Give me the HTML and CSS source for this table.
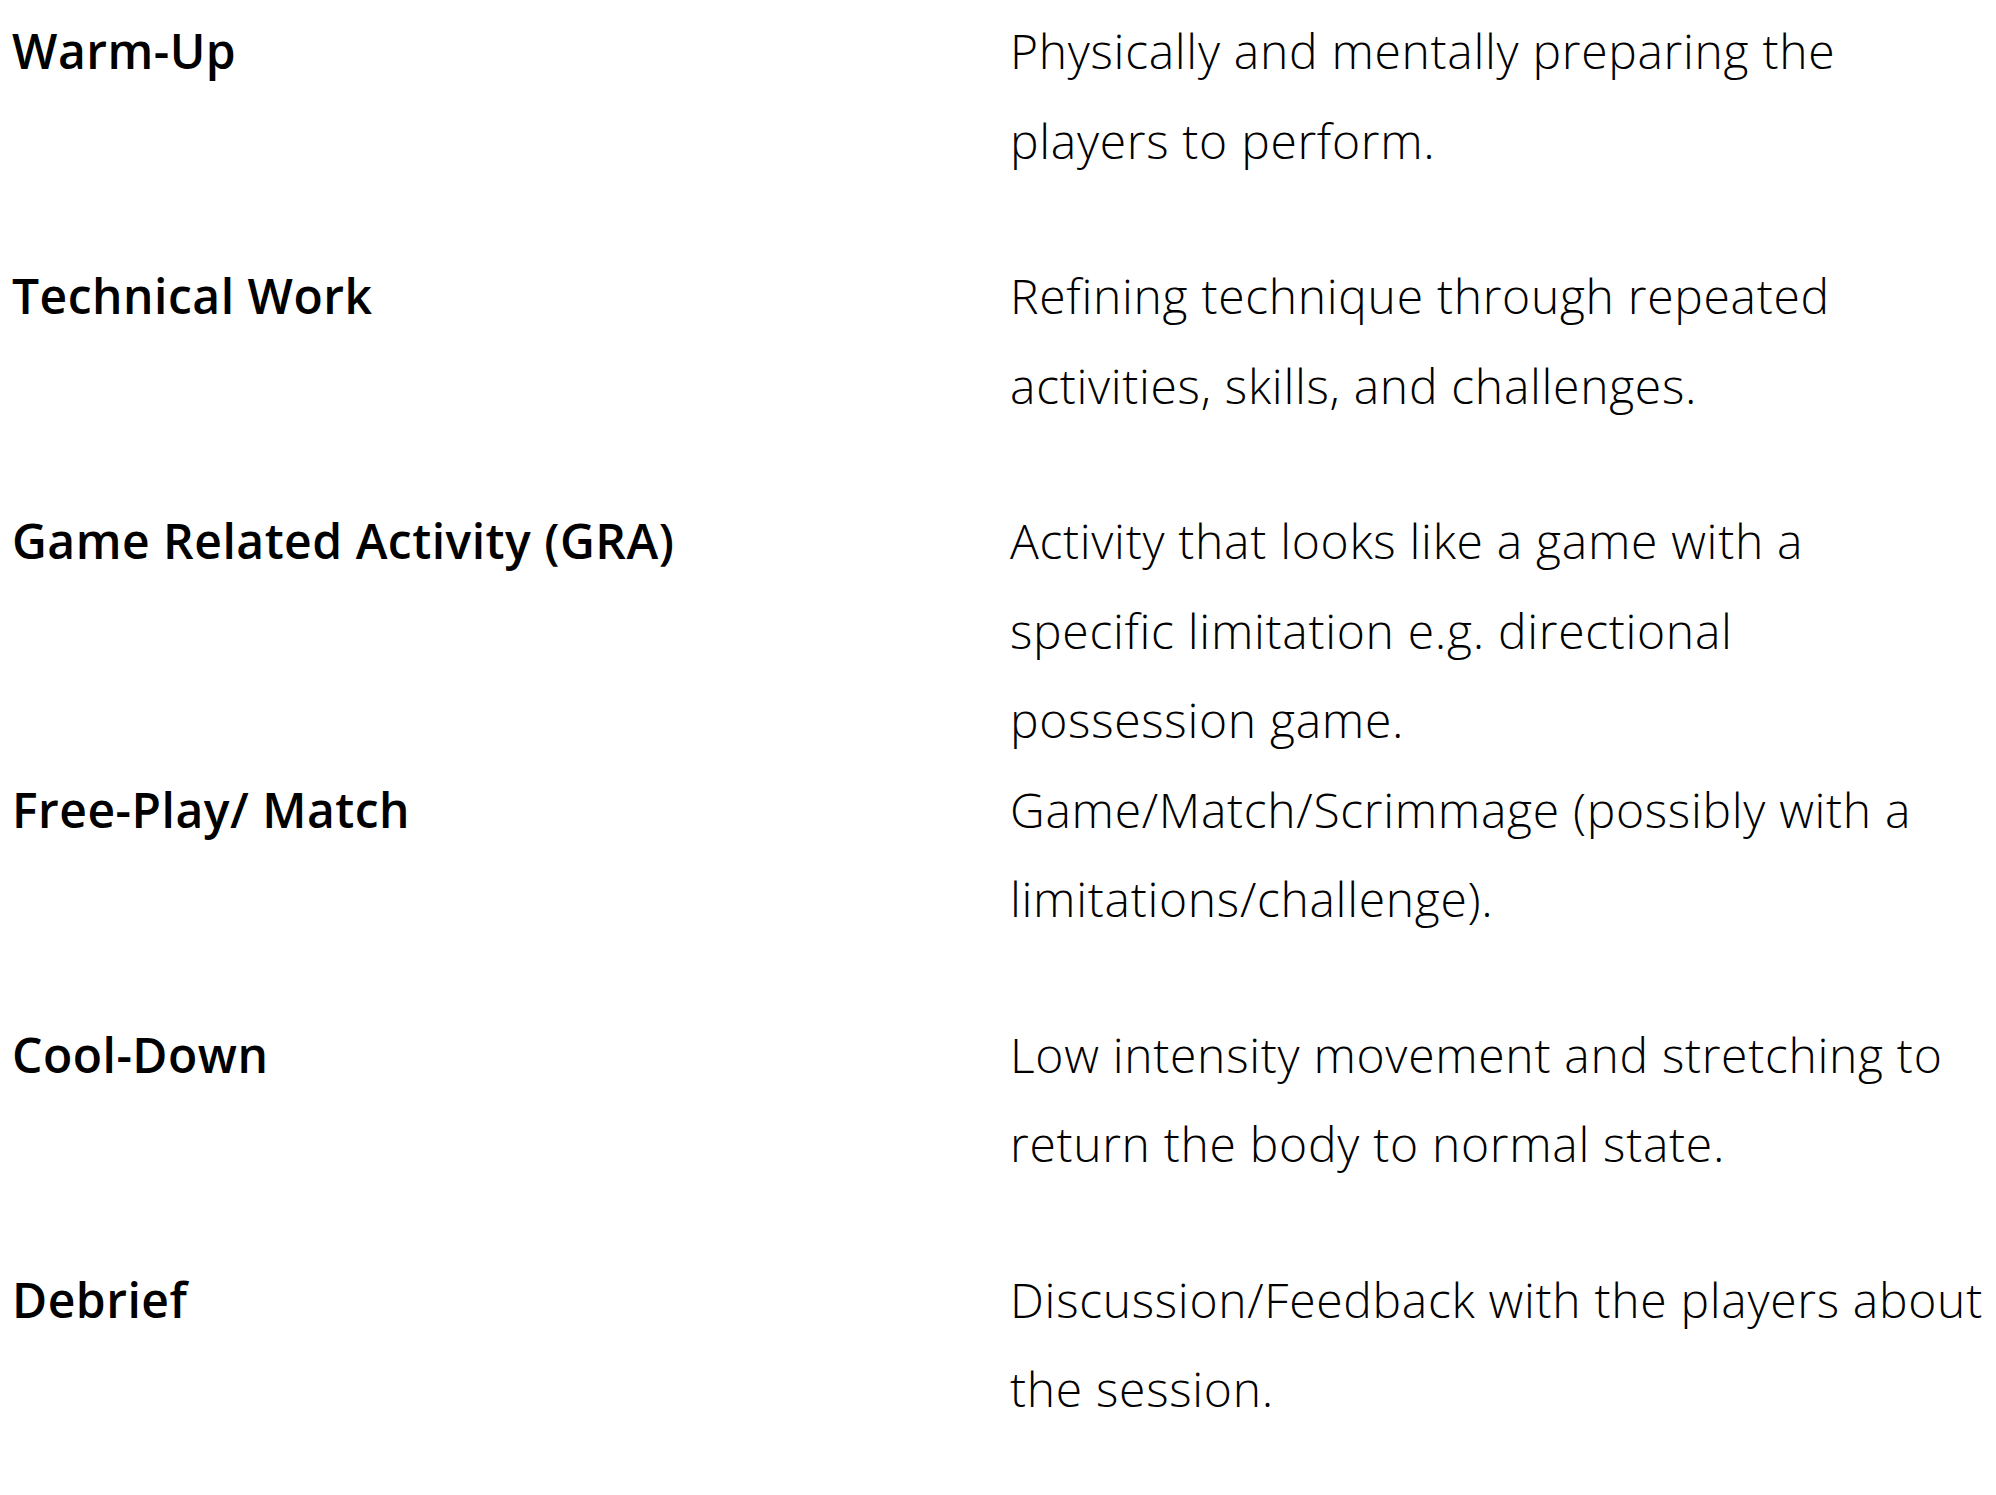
FILE: index.html
```html
<!DOCTYPE html>
<html lang="en">
<head>
<meta charset="utf-8">
<title>Session Structure</title>
<link rel="stylesheet" href="styles.css">
</head>
<body>
<dl class="phases">
  <div class="phase">
    <dt class="phase-name">Warm-Up</dt>
    <dd class="phase-desc">Physically and mentally preparing the players to perform.</dd>
  </div>
  <div class="phase">
    <dt class="phase-name">Technical Work</dt>
    <dd class="phase-desc">Refining technique through repeated activities, skills, and challenges.</dd>
  </div>
  <div class="phase">
    <dt class="phase-name">Game Related Activity (GRA)</dt>
    <dd class="phase-desc">Activity that looks like a game with a<br>specific limitation e.g. directional possession game.</dd>
  </div>
  <div class="phase">
    <dt class="phase-name">Free-Play/ Match</dt>
    <dd class="phase-desc">Game/Match/Scrimmage (possibly with a limitations/challenge).</dd>
  </div>
  <div class="phase">
    <dt class="phase-name">Cool-Down</dt>
    <dd class="phase-desc">Low intensity movement and stretching to return the body to normal state.</dd>
  </div>
  <div class="phase">
    <dt class="phase-name">Debrief</dt>
    <dd class="phase-desc">Discussion/Feedback with the players about the session.</dd>
  </div>
</dl>
</body>
</html>
```

FILE: styles.css
```css
html, body {
  margin: 0;
  padding: 0;
  background: #ffffff;
}

body {
  color: #000000;
  font-family: "Open Sans", "Noto Sans", sans-serif;
}

.phases {
  margin: 0;
  padding: 6px 8px 0 12px;
}

.phase {
  display: grid;
  grid-template-columns: 998px 1fr;
  min-height: 245px;
  align-items: start;
}

.phase-name {
  margin: 0;
  font-size: 48px;
  font-weight: 600;
  letter-spacing: 0.5px;
  line-height: 89.5px;
}

.phase-desc {
  margin: 0;
  font-size: 48px;
  font-weight: 300;
  letter-spacing: 0.7px;
  line-height: 89.5px;
}
```
